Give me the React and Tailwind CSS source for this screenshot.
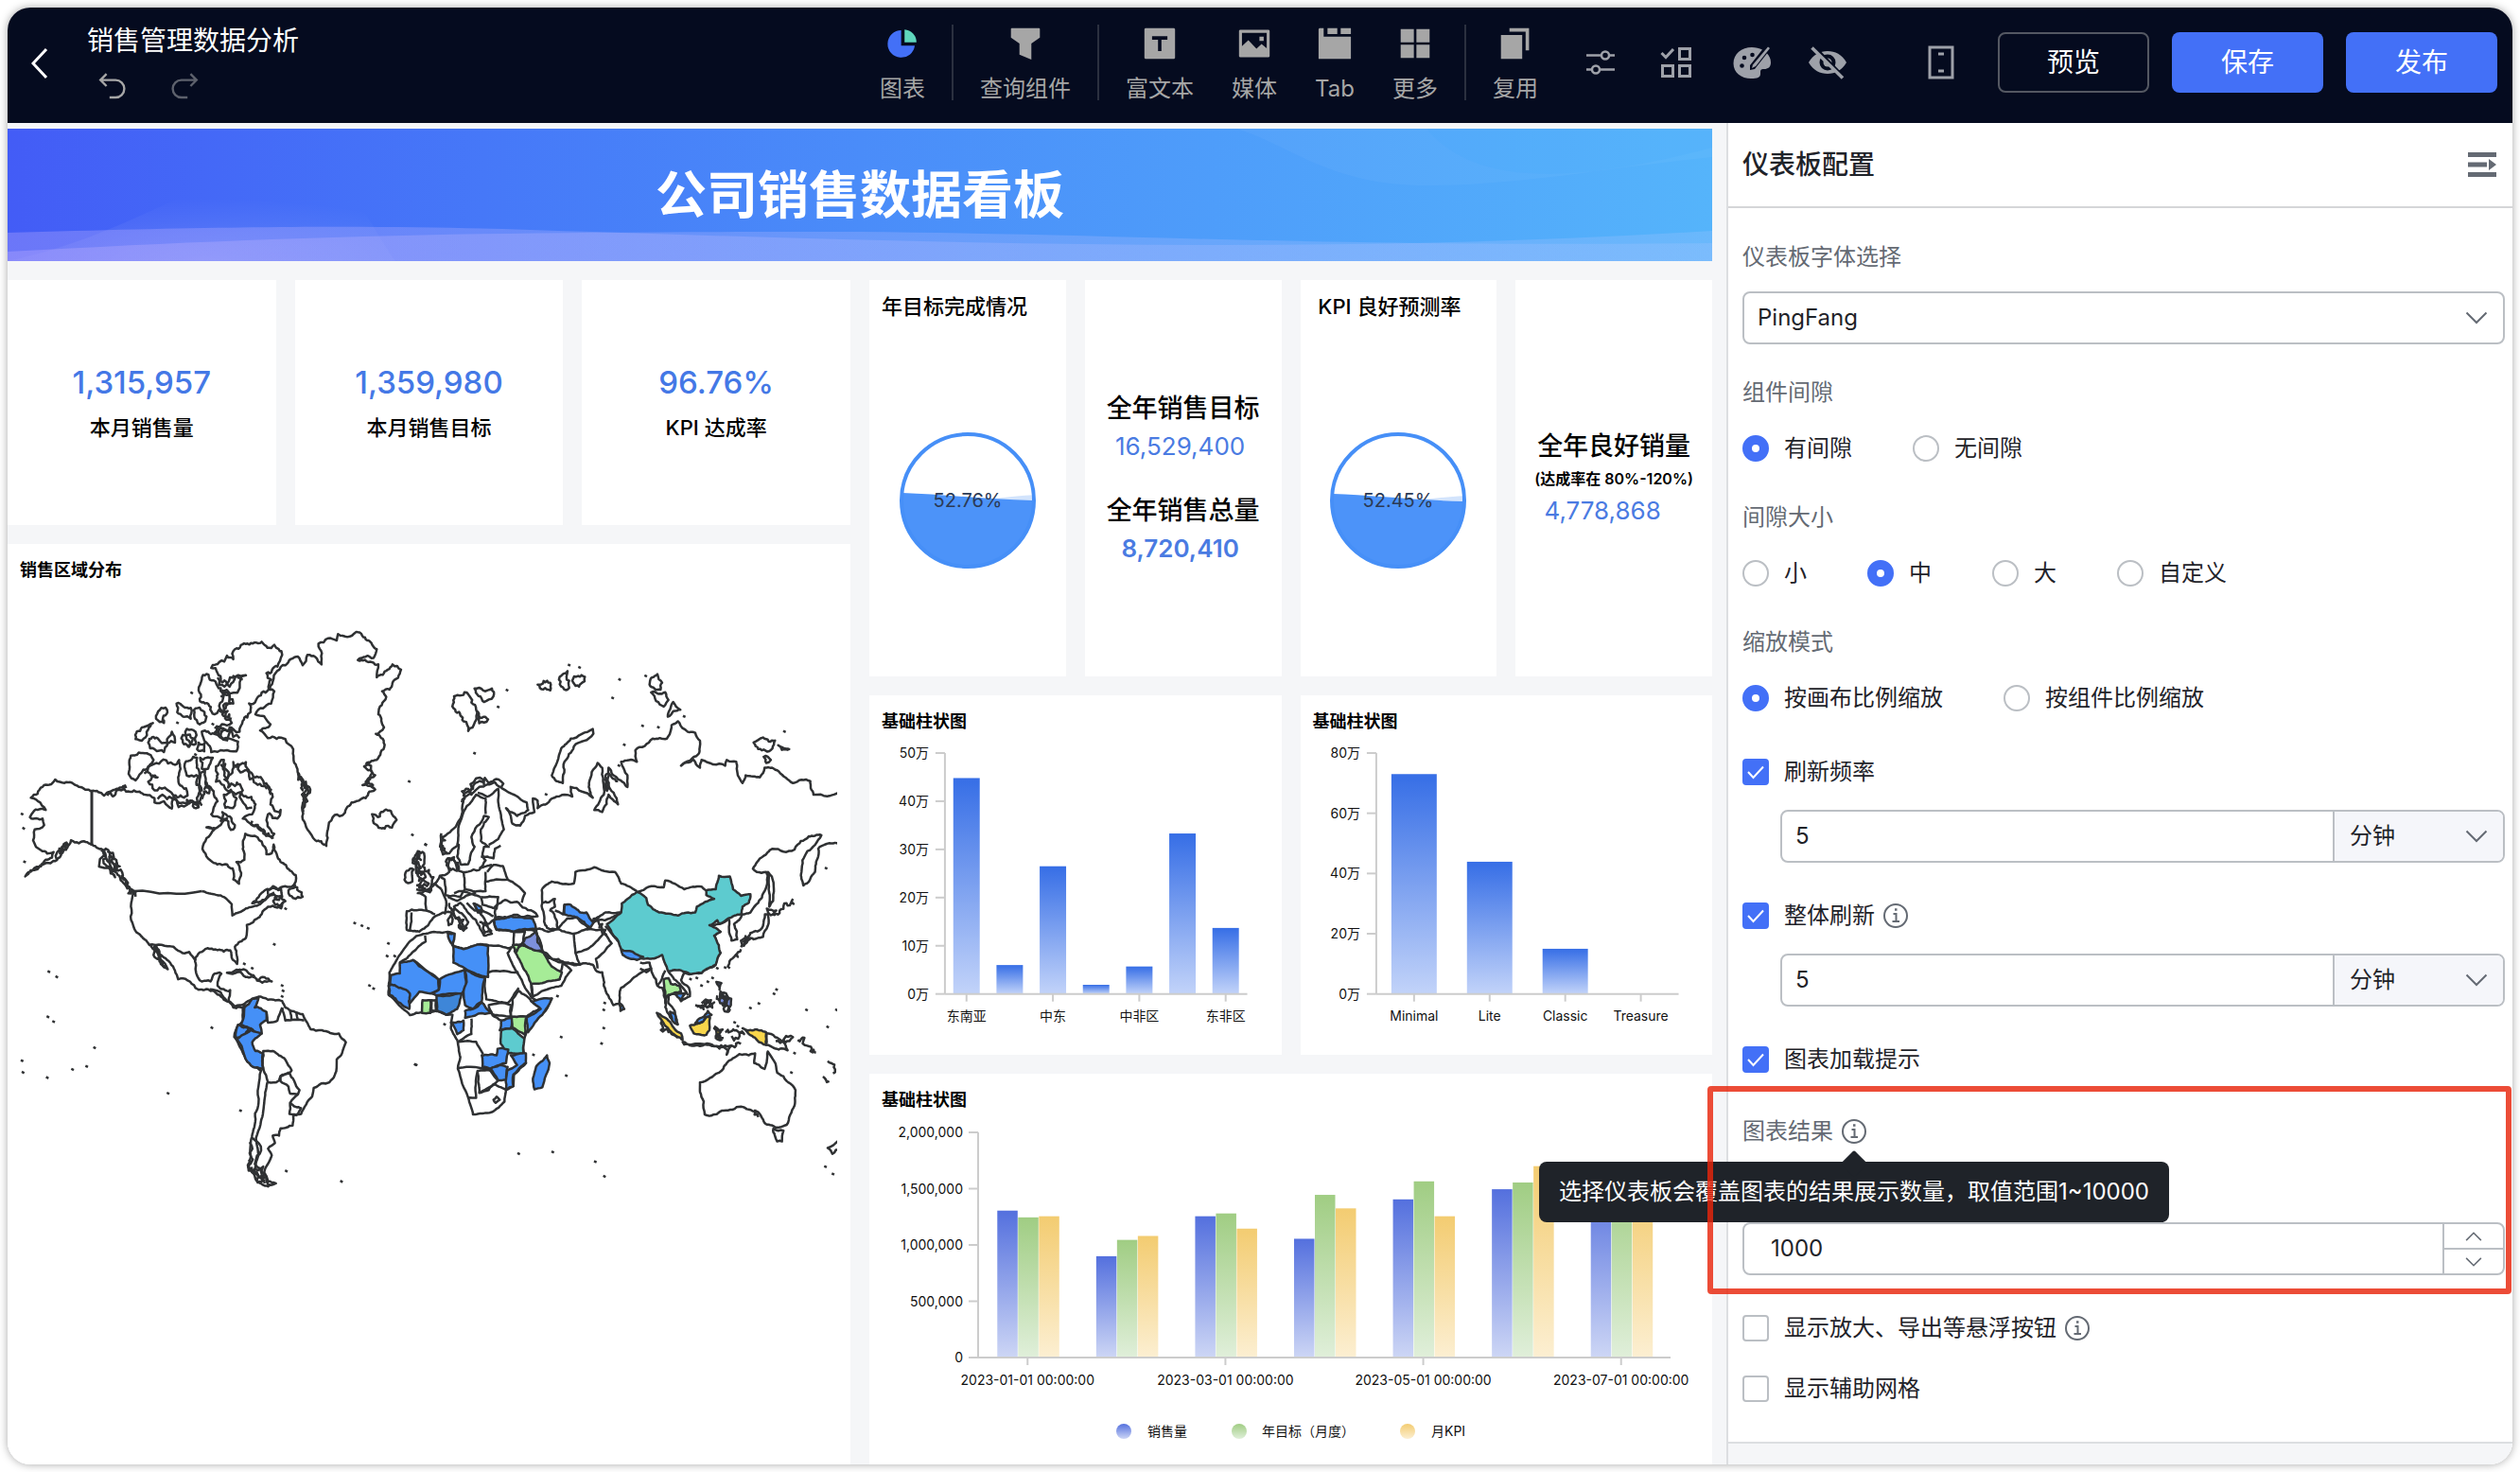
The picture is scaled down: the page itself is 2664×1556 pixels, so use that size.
import React, { useState } from 'react'

const KPIS = [
  { value: '1,315,957', label: '本月销售量' },
  { value: '1,359,980', label: '本月销售目标' },
  { value: '96.76%', label: 'KPI 达成率' },
]

const REGION_BARS = [
  { label: '东南亚', value: 448 },
  { label: '', value: 60 },
  { label: '中东', value: 265 },
  { label: '', value: 19 },
  { label: '中非区', value: 57 },
  { label: '', value: 333 },
  { label: '东非区', value: 137 },
]

const PLAN_BARS = [
  { label: 'Minimal', value: 730 },
  { label: 'Lite', value: 439 },
  { label: 'Classic', value: 150 },
  { label: 'Treasure', value: 0 },
]

const MONTHS = [
  { label: '2023-01-01 00:00:00', values: [1305, 1245, 1255] },
  { label: '', values: [900, 1045, 1080] },
  { label: '2023-03-01 00:00:00', values: [1255, 1280, 1145] },
  { label: '', values: [1055, 1445, 1325] },
  { label: '2023-05-01 00:00:00', values: [1405, 1565, 1255] },
  { label: '', values: [1495, 1555, 1700] },
  { label: '2023-07-01 00:00:00', values: [1580, 1600, 1500] },
]

const SERIES = [
  { id: 'sales', name: '销售量', from: '#5470de', to: '#cdd6f5', dot: 269, text: 294 },
  { id: 'target', name: '年目标（月度）', from: '#a0cd83', to: '#e0efda', dot: 391, text: 415 },
  { id: 'kpi', name: '月KPI', from: '#f3cc71', to: '#fcefd2', dot: 569, text: 594 },
]

/* ---------- icons ---------- */

function Svg({ size = 40, children, ...rest }) {
  return (
    <svg width={size} height={size} viewBox="0 0 40 40" fill="none" aria-hidden="true" {...rest}>
      {children}
    </svg>
  )
}

const PieIcon = () => (
  <Svg>
    <path d="M18.500 4.500A16 16 0 1 0 34.500 22.500H18.500z" fill="#4370f7" />
    <path d="M22.500 3.500a15 15 0 0 1 14 15H22.500z" fill="#5fd6bd" />
  </Svg>
)

const FunnelIcon = () => (
  <Svg>
    <path d="M4 2h32q1 0 1 1v10l-10 7v19l-14-6V20L3 13V3q0-1 1-1z" fill="currentColor" />
  </Svg>
)

const TextIcon = () => (
  <Svg>
    <path
      fillRule="evenodd"
      d="M3 2h34l1 1v34l-1 1H3l-1-1V3zM11 11.500v4h7V29h4V15.500h7v-4z"
      fill="currentColor"
    />
  </Svg>
)

const MediaIcon = () => (
  <Svg>
    <path fillRule="evenodd" d="M3 4h34l1 1v30l-1 1H3l-1-1V5zM5.500 7.500V23L13 16l9.500 10 6-5.500 6 5V7.500z" fill="currentColor" />
    <path d="M26 12h5v5h-5z" fill="currentColor" />
  </Svg>
)

const TabIcon = () => (
  <Svg>
    <path d="M2 2h5v10h32v26H1V3zM11.500 2h11.500v7H11.500zM27 2h12v7H27z" fill="currentColor" />
  </Svg>
)

const MoreIcon = () => (
  <Svg>
    <path d="M3 3h15.500v15.500H3zM21.500 3H37v15.500H21.500zM3 21.500h15.500V37H3zM21.500 21.500H37V37H21.500z" fill="currentColor" />
  </Svg>
)

const ReuseIcon = () => (
  <Svg>
    <path d="M3 10h25v28H3zM13 2h23v26h-4V6H13z" fill="currentColor" />
  </Svg>
)

const SlidersIcon = () => (
  <Svg stroke="currentColor" strokeWidth="2.500">
    <path d="M5 12.500h15.500M29 12.500h6M5 27.500h6M20 27.500h15" />
    <circle cx="25" cy="12.500" r="4" />
    <circle cx="15" cy="27.500" r="4" />
  </Svg>
)

const ChecklistIcon = () => (
  <Svg stroke="currentColor" strokeWidth="3">
    <path d="M4.500 10l4.500 4.500 8-8.500M23.500 5.500h11v11h-11zM5.500 23.500h11v11h-11zM23.500 23.500h11v11h-11z" />
  </Svg>
)

const PaletteIcon = () => (
  <Svg>
    <path
      d="M20 4C9 4 .500 11 .500 21S9 37 19 37c7 0 10-1 10-5s0-5 4-5 7-2 7-7c0-4-2-7.500-4-9.500L23 27l-5 1 0-5L31 6.500C28 5 24 4 20 4z"
      fill="currentColor"
    />
    <path d="M21 22.500 37 3.500l2 1.500-15 19-4 2z" fill="currentColor" />
    <circle cx="20.500" cy="12" r="2.300" fill="#050b1f" />
    <circle cx="12" cy="15" r="2.300" fill="#050b1f" />
    <circle cx="9.500" cy="23.500" r="2.300" fill="#050b1f" />
  </Svg>
)

const EyeOffIcon = () => (
  <Svg>
    <path d="M0 20C5 11.500 12 8 20 8s15 3.500 20 12c-5 8.500-12 12-20 12S5 28.500 0 20z" fill="currentColor" />
    <circle cx="20" cy="20" r="8.500" fill="#050b1f" />
    <circle cx="20" cy="20" r="4.500" fill="currentColor" />
    <path d="M1 5 33 38" stroke="#050b1f" strokeWidth="4" transform="translate(3 -3)" />
    <path d="M3.500 4.500 36 36.500" stroke="currentColor" strokeWidth="3.500" />
  </Svg>
)

const PhoneIcon = () => (
  <Svg stroke="currentColor" strokeWidth="3">
    <path d="M8 4h24v32H8z" />
    <path d="M17 11h6M17 29h6" />
  </Svg>
)

const UndoIcon = () => (
  <Svg size={32} stroke="currentColor" strokeWidth="3">
    <path d="M12 4 4 12l8 8M4 12h20a11 11 0 0 1 0 23h-8" />
  </Svg>
)

const RedoIcon = () => (
  <Svg size={32} stroke="currentColor" strokeWidth="3">
    <path d="m28 4 8 8-8 8M36 12H16a11 11 0 0 0 0 23h8" />
  </Svg>
)

function Chevron({ className = '' }) {
  return (
    <svg width="24" height="24" viewBox="0 0 24 24" fill="none" aria-hidden="true" className={className}>
      <path d="M1.500 6.500 12 17 22.500 6.500" stroke="#646a73" strokeWidth="2" />
    </svg>
  )
}

function InfoIcon() {
  return (
    <svg width="28" height="28" viewBox="0 0 28 28" fill="none" stroke="#646a73" strokeWidth="2" aria-hidden="true">
      <circle cx="14" cy="14" r="12" />
      <path d="M11.500 12h3v8M10.500 20h7.500" />
      <path d="M13 7.500h2.500" strokeWidth="2.500" />
    </svg>
  )
}

/* ---------- top bar ---------- */

const TOOLS = [
  { label: '图表', Icon: PieIcon, divider: true },
  { label: '查询组件', Icon: FunnelIcon, divider: true },
  { label: '富文本', Icon: TextIcon },
  { label: '媒体', Icon: MediaIcon },
  { label: 'Tab', Icon: TabIcon },
  { label: '更多', Icon: MoreIcon, divider: true },
  { label: '复用', Icon: ReuseIcon },
]

const QUICK = [
  { label: '外部参数设置', Icon: SlidersIcon },
  { label: '批量操作', Icon: ChecklistIcon },
  { label: '仪表板样式', Icon: PaletteIcon },
  { label: '隐藏组件', Icon: EyeOffIcon },
]

function TopBar() {
  return (
    <header className="flex h-[122px] shrink-0 bg-[#050b1f] pr-4 text-[#a6a6a6]">
      <div className="flex min-w-0 flex-1">
        <button aria-label="返回" className="flex w-[68px] items-center justify-center pb-1 text-white">
          <svg width="18" height="36" viewBox="0 0 18 36" fill="none" stroke="currentColor" strokeWidth="3" aria-hidden="true">
            <path d="M16 3 2 18l14 15" />
          </svg>
        </button>
        <div className="pt-[15px] pl-4">
          <h1 className="text-[28px] leading-10 whitespace-nowrap text-white">销售管理数据分析</h1>
          <div className="mt-3 flex gap-11 pl-[11px]">
            <button aria-label="撤销"><UndoIcon /></button>
            <button aria-label="重做" className="text-[#5d616c]"><RedoIcon /></button>
          </div>
        </div>
      </div>

      <nav className="flex">
        {TOOLS.map(({ label, Icon, divider }) => (
          <React.Fragment key={label}>
            <button className="flex flex-col items-center gap-3 px-5 pt-[18px]">
              <span className="flex h-10 items-center justify-center [&>svg]:size-9"><Icon /></span>
              <span className="text-2xl leading-8 whitespace-nowrap">{label}</span>
            </button>
            {divider && <span className="mx-2 mt-[18px] h-20 w-0.5 bg-[#2b303f]" />}
          </React.Fragment>
        ))}
      </nav>

      <div className="ml-[26px] flex items-center gap-10 pb-1.5 text-[#9ea1a9]">
        {QUICK.map(({ label, Icon }) => (
          <button key={label} aria-label={label}><Icon /></button>
        ))}
        <button aria-label="移动端布局" className="ml-10"><PhoneIcon /></button>
      </div>

      <div className="ml-10 flex items-center gap-6 pb-1.5 text-[28px] text-white">
        <button className="h-16 w-40 rounded-lg border-2 border-[#545862]">预览</button>
        <button className="h-16 w-40 rounded-lg bg-[#4370f7]">保存</button>
        <button className="h-16 w-40 rounded-lg bg-[#4370f7]">发布</button>
      </div>
    </header>
  )
}

/* ---------- charts ---------- */

function Banner() {
  return (
    <div className="relative flex h-[140px] items-center justify-center overflow-hidden bg-linear-to-r from-[#435cf6] via-[#4a8cf9] to-[#55b4fb]">
      <svg className="absolute inset-0 h-full w-full" viewBox="0 0 1802 140" preserveAspectRatio="none" aria-hidden="true">
        <defs>
          <radialGradient id="hill" cx="0.5" cy="1" r="0.7">
            <stop offset="0" stopColor="#fff" stopOpacity="0.14" />
            <stop offset="1" stopColor="#fff" stopOpacity="0" />
          </radialGradient>
          <linearGradient id="wave" x1="0" y1="0" x2="1" y2="0">
            <stop offset="0" stopColor="#c9b4ff" stopOpacity="0.3" />
            <stop offset="1" stopColor="#b5c8ff" stopOpacity="0.22" />
          </linearGradient>
        </defs>
        <path d="M0 140C140 110 200 45 290 45c80 0 90 55 120 95z" fill="url(#hill)" />
        <path d="M1300 0c60 20 100 60 200 60s200-20 302-30V0z" fill="#fff" fillOpacity="0.04" />
        <path d="M1500 0c50 60 150 60 302 20V0z" fill="#3fa6ff" fillOpacity="0.15" />
        <path d="M0 110C400 98 500 106 680 111c400 13 760 20 1122-3v32H0z" fill="url(#wave)" />
        <path d="M0 130c360-20 560-21 900-21 300 3 480 16 902 12v19H0z" fill="url(#wave)" />
      </svg>
      <h2 className="relative pt-0.5 text-[54px] leading-none font-bold text-white">公司销售数据看板</h2>
    </div>
  )
}

function Gauge({ title, value, label, level }) {
  return (
    <section className="flex flex-col bg-white">
      <h3 className="px-[13px] pt-[10px] text-[22px] leading-9 font-medium whitespace-pre text-black">{title}</h3>
      <div className="flex flex-1 items-center justify-center">
        <svg width="144" height="144" viewBox="0 0 144 144" role="img" aria-label={label}>
          <defs>
            <clipPath id={`clip-${level}`}><circle cx="72" cy="72" r="69" /></clipPath>
          </defs>
          <g clipPath={`url(#clip-${level})`}>
            <path d={`M60 ${level + 7}C90 ${level + 6} 120 ${level + 1} 144 ${level}v80H60z`} fill="#d3e4fc" />
            <path d={`M0 ${level - 2}C40 ${level - 1} 90 ${level + 5} 144 ${level + 6}V144H0z`} fill="#4c93f9" />
          </g>
          <circle cx="72" cy="72" r="70" fill="none" stroke="#468ff7" strokeWidth="4" />
          <text x="72" y="79" textAnchor="middle" fontSize="20" fill="#2b3a55">{value}</text>
        </svg>
      </div>
    </section>
  )
}

function CardTitle({ children }) {
  return <h3 className="px-[13px] pt-[14px] text-lg leading-7 font-bold text-black">{children}</h3>
}

function BarChart({ id, bars, max, step, barWidth }) {
  const left = 80
  const right = 400
  const base = 274
  const top = 19
  const pitch = (right - left) / bars.length
  const every = bars.length > 4 ? 2 : 1
  const ticks = []
  for (let v = 0; v <= max; v += step) ticks.push(v)
  const y = v => base - ((base - top) * v) / max

  return (
    <section className="bg-white">
      <CardTitle>基础柱状图</CardTitle>
      <svg viewBox="0 0 436 338" className="block w-full" fontSize="14" fill="#111">
        <defs>
          <linearGradient id={id} x1="0" y1="0" x2="0" y2="1">
            <stop offset="0" stopColor="#366ee6" />
            <stop offset="1" stopColor="#c2d3f9" />
          </linearGradient>
        </defs>
        <path d={`M${left} ${top}V${base}`} stroke="#ccc" strokeWidth="2" />
        {ticks.map(v => (
          <g key={v}>
            <path d={`M${left - 10} ${y(v)}h10`} stroke="#ccc" strokeWidth="2" />
            <text x={left - 17} y={y(v) + 5} textAnchor="end">{v / 10}万</text>
          </g>
        ))}
        {bars.map((bar, i) => {
          const cx = left + pitch * (i + 0.5)
          return (
            <g key={i}>
              <rect x={cx - barWidth / 2} y={y(bar.value)} width={barWidth} height={base - y(bar.value)} fill={`url(#${id})`} />
              {i % every === 0 && <path d={`M${cx} ${base}v8`} stroke="#ccc" strokeWidth="2" />}
              {bar.label && <text x={cx} y="302" textAnchor="middle">{bar.label}</text>}
            </g>
          )
        })}
        <path d={`M${left} ${base}H${right}`} stroke="#ccc" strokeWidth="2" />
      </svg>
    </section>
  )
}

function MonthlyChart() {
  const left = 115
  const right = 847
  const base = 258
  const top = 20
  const pitch = (right - left) / MONTHS.length
  const y = v => base - ((base - top) * v) / 2000

  return (
    <section className="flex-1 bg-white">
      <CardTitle>基础柱状图</CardTitle>
      <svg viewBox="0 0 891 360" className="block w-full" fontSize="14" fill="#111">
        <defs>
          {SERIES.map(s => (
            <linearGradient key={s.id} id={s.id} x1="0" y1="0" x2="0" y2="1">
              <stop offset="0" stopColor={s.from} />
              <stop offset="1" stopColor={s.to} />
            </linearGradient>
          ))}
        </defs>
        <path d={`M${left} ${top}V${base}`} stroke="#ccc" strokeWidth="2" />
        {[0, 500, 1000, 1500, 2000].map(v => (
          <g key={v}>
            <path d={`M${left - 10} ${y(v)}h10`} stroke="#ccc" strokeWidth="2" />
            <text x={left - 16} y={y(v) + 5} textAnchor="end">{(v * 1000).toLocaleString('en-US')}</text>
          </g>
        ))}
        {MONTHS.map((month, i) => {
          const cx = left + pitch * (i + 0.5)
          return (
            <g key={i}>
              {month.values.map((v, j) => (
                <rect key={j} x={cx - 32 + j * 22} y={y(v)} width="21.500" height={base - y(v)} fill={`url(#${SERIES[j].id})`} />
              ))}
              {month.label && <path d={`M${cx} ${base}v8`} stroke="#ccc" strokeWidth="2" />}
              {month.label && <text x={cx} y="287" textAnchor="middle">{month.label}</text>}
            </g>
          )
        })}
        <path d={`M${left} ${base}H${right}`} stroke="#ccc" strokeWidth="2" />
        {SERIES.map(s => (
          <g key={s.id}>
            <circle cx={s.dot} cy="336" r="8" fill={`url(#${s.id})`} />
            <text x={s.text} y="341">{s.name}</text>
          </g>
        ))}
      </svg>
    </section>
  )
}

/* ---------- world map ---------- */

// Splits every edge and nudges the new points, so a coarse outline gets a
// ragged coast. The nudge depends on the midpoint only: shared borders agree.
function coast(points, amp, close) {
  let pts = points.trim().split(' ').map(p => p.split(',').map(Number))
  if (close) pts.push(pts[0])
  for (let round = 0; round < 3; round++) {
    const next = [pts[0]]
    for (let i = 1; i < pts.length; i++) {
      const [x0, y0] = pts[i - 1]
      const [x1, y1] = pts[i]
      const len = Math.hypot(x1 - x0, y1 - y0)
      if (len > 9) {
        const mx = (x0 + x1) / 2
        const my = (y0 + y1) / 2
        const h = Math.sin(mx * 12.9898 + my * 78.233) * 43758.5453
        const off = (h - Math.floor(h) - 0.5) * len * amp
        next.push([mx - ((y1 - y0) / len) * off, my + ((x1 - x0) / len) * off])
      }
      next.push(pts[i])
    }
    pts = next
  }
  return 'M' + pts.map(p => p[0].toFixed(1) + ' ' + p[1].toFixed(1)).join('L') + (close ? 'z' : '')
}

const BLUE = '#4590f7'
const TEAL = '#5dcbcf'
const GREEN = '#a6ec97'
const YELLOW = '#f8d64b'
const PURPLE = '#7d90dc'

const WEST_LAND = [
  // North and Central America
  ['175,575 205,583 250,592 292,601 330,612 350,603 390,592 400,603 425,600 460,610 490,618 490,628 520,625 545,642 550,620 590,630 630,630 640,612 636,560 650,555 655,590 690,625 670,655 720,665 700,680 655,685 680,690 655,710 642,735 660,757 700,770 738,780 740,805 758,815 765,790 750,765 775,760 770,735 778,700 800,705 830,718 845,747 862,745 868,725 890,765 920,785 938,795 938,810 925,822 870,825 840,830 800,860 850,842 870,840 905,855 880,870 850,868 830,885 800,905 783,910 780,940 745,960 752,1000 738,990 730,968 690,968 640,972 620,985 622,1020 640,1040 668,1040 680,1022 702,1022 690,1050 730,1060 725,1085 745,1098 775,1092 775,1102 740,1100 710,1082 690,1070 660,1058 620,1055 565,1035 555,1015 520,985 492,958 510,990 532,1012 510,1000 485,965 470,952 440,930 420,905 420,845 425,832 400,820 370,790 330,740 292,725 250,722 225,715 195,745 160,768 80,798 130,775 165,755 170,742 130,738 105,715 110,690 140,680 135,665 95,662 105,650 145,645 120,625 98,617 135,592', 0.3],
  // Greenland
  ['810,425 860,400 870,372 855,368 865,350 905,312 945,292 960,312 975,288 1020,310 1010,262 1040,250 1068,255 1072,240 1130,235 1165,255 1195,275 1185,295 1135,300 1180,305 1200,310 1195,340 1230,322 1245,310 1272,322 1245,352 1235,368 1212,372 1225,385 1200,425 1218,455 1192,470 1220,495 1195,530 1155,545 1190,565 1150,588 1190,598 1160,618 1115,628 1085,658 1055,662 1040,690 1035,728 1000,715 975,690 958,640 978,600 950,570 940,545 930,505 905,482 850,480 825,462 858,448', 0.35],
  // Canadian archipelago
  ['740,298 745,275 785,262 830,258 870,265 895,288 880,315 845,330 860,345 830,375 790,400 795,420 770,440 760,465 680,468 735,445 705,425 730,400 705,370 780,335 720,355 690,330 670,318 720,290', 0.6],
  ['655,332 690,360 705,375 710,420 680,425 650,400 630,370 640,345', 0.6],
  ['640,465 680,470 755,488 750,510 670,512 655,490', 0.4],
  ['485,445 470,460 430,482 450,455 475,448', 0.5],
  ['470,490 500,480 530,490 545,465 555,490 520,512 490,505', 0.6],
  ['560,400 605,410 605,435 580,430', 0.6],
  ['495,435 530,415 520,445', 0.6],
  ['615,415 655,430 640,445 618,435', 0.6],
  ['575,480 620,465 615,495 580,490', 0.7],
  ['590,475 612,480 600,500', 0.7],
  ['630,490 650,490 648,510 625,505', 0.5],
  ['415,520 440,513 487,530 455,552 430,577 408,562', 0.3],
  ['487,540 550,540 568,530 565,570 590,595 595,612 550,612 490,600 470,580 500,570 460,560', 0.5],
  ['585,545 625,525 630,570 600,568', 0.6],
  ['635,525 675,525 660,550 640,550', 0.4],
  ['685,545 710,530 715,570 740,535 780,535 785,550 820,570 855,600 860,620 890,645 880,665 850,655 870,700 865,705 830,690 800,680 770,665 800,655 805,625 765,605 720,600 685,580', 0.6],
  ['705,650 745,680 740,690 700,670', 0.6],
  ['710,610 740,605 745,635 715,640', 0.6],
  ['915,830 935,818 960,845 930,848', 0.6],
  ['1180,655 1205,660 1240,648 1258,668 1220,688 1185,675', 0.5],
  ['720,1020 750,1013 790,1022 815,1035 780,1030 755,1018', 0.3],
  ['815,1038 862,1040 832,1043', 0.5],
  ['1325,740 1345,745 1340,775 1375,800 1368,830 1328,820 1350,800 1320,790 1310,760', 0.6],
  ['1290,785 1312,782 1308,810 1283,806', 0.5],
  // South America
  ['775,1092 800,1080 820,1075 850,1082 895,1085 905,1100 960,1115 985,1150 1020,1152 1075,1160 1097,1180 1085,1205 1068,1220 1062,1255 1045,1272 995,1285 990,1305 955,1345 930,1350 928,1372 890,1378 885,1395 865,1395 872,1412 850,1425 862,1440 850,1460 838,1480 850,1500 875,1505 850,1512 815,1500 790,1470 795,1415 808,1370 820,1320 828,1245 785,1225 760,1190 743,1168 755,1140 772,1130 770,1105', 0.2],
  ['775,1100 800,1080 820,1078 808,1100 845,1110 845,1130 825,1140 830,1160 800,1150 765,1138 772,1125', 0.2, BLUE],
  ['755,1140 790,1148 775,1165 748,1170', 0.2, BLUE],
  ['748,1172 795,1152 830,1160 800,1180 810,1200 832,1205 835,1242 785,1225', 0.2, BLUE],
  ['835,1200 865,1200 905,1220 925,1245 915,1252 890,1258 885,1268 850,1272 835,1242', 0.2],
  ['890,1258 915,1250 950,1290 945,1300 920,1298 915,1282 890,1270', 0.2],
  ['920,1320 955,1332 940,1348 918,1345', 0.2],
]

const WEST_LINES = [
  '425,832 640,832',
  '475,955 550,960 580,975 600,972 620,992',
  '640,832 700,842 735,862 737,888 780,872 825,862 870,835',
  '845,1110 850,1135 880,1130 895,1100',
  '895,1100 905,1130 935,1128 965,1130',
  '920,1108 925,1130',
  '940,1110 945,1130',
  '848,1272 838,1320 826,1370 812,1400 820,1440 805,1480 840,1500',
  '945,1300 920,1320',
  '665,1058 700,1065 720,1085',
]

// Inlets and skerries too dense to outline one by one
const WEST_ROUGH = [
  '325,735 375,775 350,775 330,745',
  '345,755 375,785 400,820 430,845',
  '320,738 360,770 380,775 340,740',
  '350,785 365,800 358,792',
  '385,795 400,815 430,835 410,830',
  '340,612 370,600 385,600 400,595',
  '500,620 560,622 610,625 640,635',
  '700,540 712,575 745,590 770,600 800,640',
  '740,545 790,560 830,590 860,610',
  '800,670 835,690 868,708',
  '955,575 975,590 958,610 975,625 962,650',
  '945,560 960,600 970,580 965,640',
  '1160,540 1180,560 1160,580 1185,590',
  '850,840 895,845 870,860 900,858',
  '485,960 505,985 525,1005',
  '792,1410 802,1450 795,1475 830,1500',
  '800,1400 812,1450 820,1490 860,1508',
  '790,1450 800,1480 815,1480 840,1505',
  '210,720 190,745 215,725 180,760',
  '690,340 740,350 770,345',
  '700,385 740,400 710,410 735,435',
  '680,455 740,460 700,475 760,480',
  '635,570 640,600 630,640',
  '650,580 665,600 640,620',
  '1320,745 1335,760 1320,775 1345,790',
]

const EAST_LAND = [
  // Africa
  ['0,856 30,850 100,845 120,850 115,880 150,890 195,878 230,880 290,888 303,885 290,900 320,950 345,990 365,1015 390,1030 430,1018 410,1050 350,1105 340,1130 348,1185 310,1215 308,1245 285,1255 280,1285 240,1312 180,1318 165,1275 132,1200 140,1170 130,1125 110,1095 115,1060 95,1060 60,1050 20,1052 -20,1061 -60,1030 -88,1008 -85,951 -60,915 -30,880', 0.12],
  ['-80,957 -52,953 -52,925 -10,918 70,968 72,995 45,1005 10,1000 -10,1020 -20,1030 -40,1010 -84,990', 0.08, BLUE],
  ['-88,985 -50,990 -20,1005 -22,1045 -50,1030 -85,1010', 0.3, BLUE],
  ['75,968 155,942 160,985 145,1005 65,1010 50,1005 72,995', 0.1, BLUE],
  ['155,942 218,965 208,1025 180,1045 155,1035 150,1000 160,975', 0.12, BLUE],
  ['155,1050 180,1045 208,1028 240,1055 155,1068', 0.15, BLUE],
  ['117,880 150,890 195,878 228,882 228,962 155,940 118,925', 0.1, BLUE],
  ['100,848 122,850 115,880', 0.2, BLUE],
  ['65,1010 145,1005 130,1045 95,1060 65,1048', 0.15, '#3e86d8'],
  ['20,1022 45,1022 45,1055 18,1055', 0.1, GREEN],
  ['48,1022 62,1022 62,1050 48,1053', 0.1],
  ['110,1080 150,1075 150,1100 130,1110', 0.2, BLUE],
  ['230,1035 300,1035 300,1065 240,1058', 0.2],
  ['300,1055 305,1020 325,998 365,1025 395,1042 350,1065 300,1065', 0.15],
  ['300,1065 350,1065 345,1112 305,1092', 0.12, GREEN],
  ['270,1075 303,1068 300,1095 265,1100', 0.15, BLUE],
  ['365,1025 430,1018 400,1060 355,1105 350,1068 395,1045', 0.1, BLUE],
  ['270,1100 305,1095 342,1120 340,1160 290,1160 268,1135', 0.12, TEAL],
  ['208,1165 255,1165 258,1148 292,1150 285,1185 235,1200 210,1195', 0.15, BLUE],
  ['300,1165 348,1160 348,1185 308,1215 308,1245 285,1253 288,1205 320,1190', 0.15, BLUE],
  ['235,1200 265,1190 290,1195 285,1228 260,1230', 0.15, BLUE],
  ['400,1180 415,1165 423,1185 400,1248 375,1253 370,1225 380,1195', 0.15, BLUE],
  ['195,1205 235,1205 260,1230 230,1255 200,1262', 0.15],
  ['245,1280 255,1272 265,1280 252,1288', 0.2],
  // Middle East
  ['310,845 345,845 340,870 330,880 315,895 308,880', 0.15],
  ['400,895 430,915 470,925 520,930 505,900 500,850 450,838 420,845 380,838 385,860', 0.15],
  ['365,980 455,968 465,925 492,945 460,985 430,990 370,1013', 0.12],
  ['312,895 335,880 372,892 405,900 430,935 462,950 455,968 400,978 365,980 340,940', 0.12, GREEN],
  ['306,880 330,878 318,897', 0.1, GREEN],
  ['345,862 380,845 400,895 372,892 338,875', 0.12, PURPLE],
  ['245,815 300,805 370,812 380,838 310,845 255,840', 0.15, BLUE],
  ['185,772 205,780 208,795 195,795', 0.2, BLUE],
  // Europe
  ['85,645 78,600 130,565 150,500 200,470 250,458 275,475 350,510 355,530 320,545 285,525 300,545 305,565 330,570 345,545 375,535 370,500 385,505 385,525 430,500 495,495 490,470 560,498 548,460 575,408 590,420 595,490 565,530 590,535 610,490 640,515 605,460 610,420 640,450 670,470 670,440 650,405 700,405 695,375 750,345 795,345 810,310 830,300 850,320 885,330 900,350 895,385 840,415 880,400 900,420 905,400 980,415 985,400 1015,405 1020,440 1035,460 1045,440 1090,445 1105,420 1150,430 1195,460 1250,455 1260,490 1345,480 1345,618 1300,618 1275,630 1275,650 1265,690 1228,725 1222,690 1225,660 1265,620 1285,595 1245,598 1220,610 1200,632 1130,630 1100,650 1068,682 1080,690 1110,690 1115,700 1105,740 1085,770 1060,795 1035,800 1008,825 1018,865 1000,868 990,810 960,825 930,828 965,845 945,855 965,900 950,930 905,952 870,955 850,950 840,970 865,990 868,1012 840,1025 820,1005 800,1010 800,1030 820,1050 830,1085 812,1072 790,1040 785,1000 780,990 765,985 750,955 745,940 705,955 650,990 645,1030 625,1035 595,985 590,950 570,945 560,930 520,930 470,925 430,915 400,895 380,845 310,845 255,840 245,815 225,825 240,850 215,855 200,830 175,805 140,770 120,780 165,820 150,840 110,795 60,805 40,825 10,845 -30,840 -30,792 32,790 30,755 5,745 60,720 75,700 105,690 105,655 120,660 130,685 200,685 220,660 210,645 215,625 230,625 205,610 205,580 230,548 215,545 175,600 185,625 165,670 140,670 130,650 135,620 105,642', 0.22, 'none'],
  ['100,655 120,652 135,685 110,685', 0.6],
  ['100,815 112,800 112,825 103,828', 0.3],
  ['135,828 160,835 150,842', 0.5],
  ['400,770 440,760 440,780 425,790 445,815 450,838 415,835 405,800', 0.3],
  ['250,780 275,765 325,770 385,805 300,805 250,810', 0.3],
  ['560,320 562,332 500,365 470,405 465,460 445,455 430,440 460,370 490,345', 0.25],
  ['120,235 165,230 190,270 165,325 150,300 125,275', 0.6],
  ['185,215 240,215 245,235 215,250', 0.4],
  ['195,275 228,295 200,305', 0.5],
  ['385,205 425,200 425,220', 0.7],
  ['455,185 480,170 485,195 480,218 460,210', 0.7],
  ['495,195 535,185 505,208', 0.6],
  ['740,205 765,178 780,200 775,218', 0.4],
  ['745,225 790,225 800,245 785,262', 0.3],
  ['798,288 815,250 838,270', 0.3],
  ['1070,355 1100,342 1138,350 1130,370 1085,372', 0.4],
  ['1148,362 1183,372 1160,374', 0.3],
  ['1102,392 1125,400 1110,408', 0.4],
  // Asia
  ['470,775 490,775 520,795 540,795 562,822 552,835 510,808 470,800', 0.15, BLUE],
  ['605,825 650,795 652,772 670,760 700,742 730,758 735,775 770,795 830,803 885,795 890,780 945,760 920,750 920,738 950,735 960,700 995,702 1005,735 1030,752 1060,748 1055,770 1035,780 1030,800 990,810 960,825 955,815 930,828 950,835 965,845 945,855 960,880 965,900 950,930 905,952 870,955 840,945 800,948 788,925 780,905 745,915 700,910 650,890 640,868 625,855', 0.15, TEAL],
  ['650,892 720,910 700,918 655,905', 0.15, BLUE],
  ['645,1030 660,1045 648,1050', 0.2, BLUE],
  ['785,968 800,965 808,980 835,985 840,1000 800,1008 790,1030 790,1000', 0.2, GREEN],
  ['820,1005 855,1003 840,1022', 0.2, BLUE],
  ['805,1052 822,1060 828,1085 812,1075', 0.2, BLUE],
  ['763,1055 800,1075 840,1108 845,1125 810,1110 775,1070', 0.2, YELLOW],
  ['845,1130 900,1135 960,1142 1000,1140 960,1145 900,1141 850,1137', 0.2, YELLOW],
  ['868,1088 905,1080 920,1062 932,1068 930,1100 920,1112 880,1108', 0.2, YELLOW],
  ['885,1082 925,1050 937,1060 910,1078', 0.3, BLUE],
  ['945,1095 972,1098 955,1110 968,1125 950,1120', 0.5, YELLOW],
  ['1035,1095 1070,1100 1110,1105 1110,1138 1080,1125 1050,1105', 0.25, YELLOW],
  ['1110,1108 1165,1130 1178,1152 1140,1148 1110,1138', 0.25],
  ['952,975 968,978 962,995', 0.4, PURPLE],
  ['965,1000 985,1010 998,1035 990,1052 970,1030', 0.7, PURPLE],
  ['1116,690 1128,702 1132,765 1120,780 1118,720', 0.15],
  ['1112,785 1142,790 1125,802', 0.3],
  ['1115,800 1115,830 1100,858 1060,862 1035,880 1030,868 1060,848 1100,830 1106,800', 0.3],
  // Australia
  ['900,1235 960,1210 985,1185 1025,1162 1055,1165 1075,1160 1072,1185 1105,1200 1115,1155 1135,1180 1145,1210 1180,1235 1203,1255 1200,1295 1175,1345 1140,1352 1105,1340 1080,1310 1030,1298 975,1308 930,1322 915,1318 912,1285 900,1260', 0.2],
  ['1133,1355 1165,1360 1160,1388 1145,1388', 0.3],
  ['1345,1382 1305,1405 1320,1420 1345,1405', 0.3],
]

const EAST_LINES = [
  '-30,915 0,890 30,870 28,855',
  '-10,918 70,968',
  '-52,925 -30,915',
  '230,950 325,950',
  '218,965 222,1020 240,1022 290,1030 325,990',
  '135,1130 190,1130 212,1162',
  '175,1070 175,1110 135,1130',
  '240,1060 270,1075',
  '132,1198 240,1204',
  '195,1205 190,1275 165,1275',
  '200,1262 250,1240 288,1255',
  '365,980 368,1012',
  '398,735 400,770',
  '398,735 430,715 500,720 505,690 565,678 630,690 650,720 700,740',
  '440,790 465,800 470,775',
  '650,795 600,795 560,812',
  '700,742 740,728 785,730 790,712 850,735 905,728 920,738',
  '450,838 480,810 510,808 550,838 500,850',
  '550,838 600,840 560,880 505,900',
  '590,845 620,875 570,915 575,940',
  '600,830 620,850 640,870',
  '560,812 600,815 640,800',
  '710,925 740,925 745,940 730,950 710,940',
  '790,945 765,985',
  '800,948 840,985 862,1010',
  '75,700 90,710 92,750 140,755 155,735 220,740 220,690',
  '150,690 155,735',
  '225,690 245,672 275,675 290,710 220,715',
  '290,710 345,745 335,770',
  '205,755 260,755 255,785 210,775 205,755',
  '100,755 130,765 190,745',
  '32,790 60,800',
  '0,735 40,740 60,720 80,735',
  '130,620 135,570 160,520 190,490 220,500 220,540',
  '195,485 225,495 260,475 262,520 278,580 260,605 230,620',
  '205,650 245,655 250,630 268,622',
  '200,680 240,672',
  '180,770 205,800 225,825',
  '160,770 185,790 210,790 245,805',
  '80,735 95,765 90,800',
  '120,745 135,740 185,750 205,755',
  '-15,795 -20,840',
]

const EAST_ROUGH = [
  '80,590 90,630 80,610 100,640',
  '150,495 180,475 230,460 270,470',
  '145,510 175,490 215,465',
  '200,820 225,830 215,850 240,845',
  '595,450 605,480 600,440 640,455',
  '890,1040 920,1025 945,1028 900,1042',
  '885,1035 915,1035 935,1022 905,1030',
  '965,1010 985,1030 975,1045 995,1045',
  '965,1000 990,1020 980,1040',
  '955,1010 975,1018 985,1035',
  '980,1105 1015,1100 1040,1110 1000,1115',
  '945,1090 960,1100 950,1115 975,1120',
  '960,1150 1000,1140 1030,1135',
  '1140,1128 1195,1118 1170,1130',
  '1210,1125 1240,1140 1268,1158',
  '1290,1220 1310,1232',
  '1305,1180 1322,1212',
  '1130,800 1165,778 1195,760',
  '995,940 1020,910 1030,890',
  '1035,870 1060,862 1030,885',
  '1075,1305 1085,1325',
  '0,640 15,680 5,700 40,720 0,725',
  '560,812 590,825 605,850',
  '780,1075 800,1105 830,1120',
  '105,770 120,785 150,830',
]

const WEST_DOTS = '70,655 75,688 78,765 155,1018 180,1030 152,1122 170,1133 300,1193 70,1223 73,1250 230,1243 275,1236 150,1262 533,1298 763,1338 908,1477 1083,1501 870,955 906,873 672,1147 1298,580 1308,703 1350,725 1125,906 1148,912 1168,918 1232,953 1228,982 1252,982 1172,1050 1185,1057 1317,1232 608,376 675,448 563,445 895,1050 898,1062 895,1075 620,518 800,1010 775,1000'
const EAST_DOTS = '185,383 288,220 260,263 485,155 518,161 645,192 623,240 728,183 850,288 768,316 718,312 660,361 1168,327 412,490 643,415 30,620 1300,681 598,1030 595,1048 595,1095 588,1135 460,1118 448,1012 476,1218 372,1164 0,1190 325,1420 433,1416 568,1441 597,1479 1143,995 1135,1006 1087,1031 1238,1048 1305,1092 1333,1048 1060,1043 1298,1454 1322,1473 90,1085 955,940 980,938 890,965 905,985 940,965 925,975 1010,1080 1020,1090 1200,1160 1190,1210 870,968'

function Dots({ points }) {
  return points.split(' ').map(p => {
    const [x, y] = p.split(',').map(Number)
    return <path key={p} d={`M${x - 4} ${y - 2}l8 3`} fill="none" />
  })
}

function Region({ land, lines, rough, dots, transform }) {
  return (
    <g transform={transform} className="[&_path]:[vector-effect:non-scaling-stroke]">
      {land.map(([points, amp, fill]) => (
        <path key={points} d={coast(points, amp, true)} fill={fill || 'none'} />
      ))}
      {lines.map(points => <path key={points} d={coast(points, 0.12, false)} fill="none" />)}
      {rough.map(points => <path key={points} d={coast(points, 1, false)} fill="none" />)}
      <Dots points={dots} />
    </g>
  )
}

function WorldMap() {
  return (
    <section className="flex-1 bg-white">
      <CardTitle>销售区域分布</CardTitle>
      <svg viewBox="8 617 891 700" className="block w-full" stroke="#2f3133" strokeWidth="2.500" strokeLinejoin="round" role="img" aria-label="销售区域分布">
        <defs>
          <clipPath id="frame"><path d="M20 617h865v700H20z" /></clipPath>
        </defs>
        <g clipPath="url(#frame)">
          <Region land={WEST_LAND} lines={WEST_LINES} rough={WEST_ROUGH} dots={WEST_DOTS} transform="translate(0 560) scale(0.3333 0.4591)" />
          <path d="M97 836v58" strokeWidth="3" />
          <Region land={EAST_LAND} lines={EAST_LINES} rough={EAST_ROUGH} dots={EAST_DOTS} transform="translate(440 640) scale(0.3333 0.4082)" />
        </g>
      </svg>
    </section>
  )
}

function Dashboard() {
  return (
    <main className="flex min-w-0 flex-1 flex-col gap-5 bg-[#f5f6f8] pt-[6px] pr-[15px]">
      <Banner />
      <div className="grid flex-1 grid-cols-2 gap-5">
        <div className="flex flex-col gap-5">
          <div className="grid h-[259px] grid-cols-3 gap-5">
            {KPIS.map(kpi => (
              <section key={kpi.label} className="flex flex-col items-center bg-white pt-[86px]">
                <strong className="text-[33px] leading-[44px] font-medium text-[#4478e6]">{kpi.value}</strong>
                <span className="mt-2 text-[22px] leading-9 font-medium text-black">{kpi.label}</span>
              </section>
            ))}
          </div>
          <WorldMap />
        </div>

        <div className="flex flex-col gap-5">
          <div className="grid h-[419px] grid-cols-4 gap-5">
            <Gauge title="年目标完成情况" label="年目标完成情况" value="52.76%" level={66} />
            <section className="flex flex-col items-center bg-white pt-[116px] text-[27px] leading-10 whitespace-nowrap">
              <span className="font-medium text-black">全年销售目标</span>
              <span className="pr-1.5 text-[26px] text-[#4a7be2]">16,529,400</span>
              <span className="mt-7 font-medium text-black">全年销售总量</span>
              <span className="pr-1.5 text-[26px] font-semibold text-[#4a7be2]">8,720,410</span>
            </section>
            <Gauge title={'\u00a0KPI 良好预测率'} label="KPI 良好预测率" value="52.45%" level={67} />
            <section className="flex flex-col items-center bg-white pt-[156px] text-[27px] leading-10 whitespace-nowrap">
              <span className="font-medium text-black">全年良好销量</span>
              <span className="text-base leading-7 font-semibold text-black">(达成率在 80%-120%)</span>
              <span className="pr-6 text-[26px] text-[#4a7be2]">4,778,868</span>
            </section>
          </div>
          <div className="grid grid-cols-2 gap-5">
            <BarChart id="region" bars={REGION_BARS} max={500} step={100} barWidth={28} />
            <BarChart id="plan" bars={PLAN_BARS} max={800} step={200} barWidth={48} />
          </div>
          <MonthlyChart />
        </div>
      </div>
    </main>
  )
}

/* ---------- config panel ---------- */

function Radios({ legend, name, options, value }) {
  return (
    <fieldset>
      <legend className="leading-8 text-[#646a73]">{legend}</legend>
      <div className="mt-[27px] flex gap-16">
        {options.map(option => (
          <label key={option} className="flex h-8 items-center gap-4">
            <input
              type="radio"
              name={name}
              defaultChecked={option === value}
              className="size-7 appearance-none rounded-full border-2 border-[#bbbfc4] bg-white checked:border-[10px] checked:border-[#4370f7]"
            />
            {option}
          </label>
        ))}
      </div>
    </fieldset>
  )
}

function Check({ label, checked, info }) {
  return (
    <div className="flex h-8 items-center gap-2">
      <label className="flex items-center gap-4">
        <span className="grid size-7">
          <input
            type="checkbox"
            defaultChecked={checked}
            className="peer col-start-1 row-start-1 size-7 appearance-none rounded-sm border-2 border-[#bbbfc4] bg-white checked:border-[#4370f7] checked:bg-[#4370f7]"
          />
          <svg viewBox="0 0 28 28" fill="none" stroke="#fff" strokeWidth="2" aria-hidden="true" className="pointer-events-none invisible col-start-1 row-start-1 peer-checked:visible">
            <path d="m6 14 5.500 6L22 8.500" />
          </svg>
        </span>
        {label}
      </label>
      {info && <InfoIcon />}
    </div>
  )
}

function Interval({ label }) {
  return (
    <div className="mt-6 mb-10 ml-10 flex h-14 overflow-hidden rounded-lg border-2 border-[#bbbfc4]">
      <input aria-label={label} defaultValue="5" className="min-w-0 flex-1 px-[14px] outline-none" />
      <div className="relative w-[180px] border-l-2 border-[#bbbfc4] bg-[#f5f6fa]">
        <select aria-label={`${label}单位`} className="h-full w-full appearance-none bg-transparent px-4 outline-none">
          <option>分钟</option>
        </select>
        <Chevron className="pointer-events-none absolute top-[14px] right-4" />
      </div>
    </div>
  )
}

function ResultField() {
  const [count, setCount] = useState(1000)

  return (
    <div className="relative mt-11">
      <div className="flex h-8 items-center gap-2 text-[#646a73]">
        <label htmlFor="result-count">图表结果</label>
        <span className="relative">
          <InfoIcon />
          <span role="tooltip" className="absolute top-[46px] left-1/2 z-10 -translate-x-1/2 rounded-lg bg-[#1f2329] px-[21px] leading-[64px] whitespace-nowrap text-white">
            <span className="absolute -top-2 left-1/2 size-5 -translate-x-1/2 rotate-45 rounded-xs bg-[#1f2329]" />
            <span className="relative">选择仪表板会覆盖图表的结果展示数量，取值范围1~10000</span>
          </span>
        </span>
      </div>
      <div className="mt-20 flex h-14 overflow-hidden rounded-lg border-2 border-[#bbbfc4]">
        <input
          id="result-count"
          inputMode="numeric"
          value={count}
          onChange={e => setCount(Number(e.target.value) || 0)}
          className="min-w-0 flex-1 px-7 outline-none"
        />
        <div className="flex w-16 flex-col border-l-2 border-[#bbbfc4]">
          <button type="button" aria-label="增加" onClick={() => setCount(count + 1)} className="flex flex-1 items-center justify-center border-b-2 border-[#bbbfc4]">
            <Chevron className="size-[18px] rotate-180" />
          </button>
          <button type="button" aria-label="减少" onClick={() => setCount(count - 1)} className="flex flex-1 items-center justify-center">
            <Chevron className="size-[18px]" />
          </button>
        </div>
      </div>
      <div className="pointer-events-none absolute -top-8 -right-[7px] -bottom-5 -left-[37px] z-20 rounded-sm border-[6px] border-[rgba(232,36,11,0.82)]" />
    </div>
  )
}

function ConfigPanel() {
  return (
    <aside className="flex w-[831px] shrink-0 flex-col border-l-2 border-[#dcdee1] bg-white text-2xl text-[#1f2329]">
      <div className="flex h-[90px] items-center justify-between border-b-2 border-[#d5d6d8] pr-4 pl-[15px]">
        <h2 className="pt-0.5 text-[28px] font-medium">仪表板配置</h2>
        <button aria-label="收起面板">
          <svg width="32" height="28" viewBox="0 0 32 28" fill="#646a73" aria-hidden="true">
            <path d="M1 1h30v5H1zM1 11.500h20v5H1zM1 22h30v5H1zM23 8l8 6-8 6z" />
          </svg>
        </button>
      </div>

      <form className="pt-9 pr-2 pb-10 pl-[15px]">
        <label htmlFor="font" className="block leading-8 text-[#646a73]">仪表板字体选择</label>
        <div className="relative mt-5">
          <select id="font" className="h-14 w-full appearance-none rounded-lg border-2 border-[#bbbfc4] bg-white px-[14px] outline-none">
            <option>PingFang</option>
          </select>
          <Chevron className="pointer-events-none absolute top-4 right-[18px]" />
        </div>

        <div className="mt-[35px] mb-[46px] flex flex-col gap-[41px]">
          <Radios legend="组件间隙" name="gap" options={['有间隙', '无间隙']} value="有间隙" />
          <Radios legend="间隙大小" name="gap-size" options={['小', '中', '大', '自定义']} value="中" />
          <Radios legend="缩放模式" name="scale" options={['按画布比例缩放', '按组件比例缩放']} value="按画布比例缩放" />
        </div>

        <Check label="刷新频率" checked />
        <Interval label="刷新频率" />
        <Check label="整体刷新" checked info />
        <Interval label="整体刷新" />
        <Check label="图表加载提示" checked />
        <ResultField />
        <div className="mt-10 flex flex-col gap-8">
          <Check label="显示放大、导出等悬浮按钮" info />
          <Check label="显示辅助网格" />
        </div>
      </form>
      <div className="flex-1 border-t-2 border-[#dcdee1] bg-[#f5f6f8]" />
    </aside>
  )
}

export default function App() {
  return (
    <div className="flex min-h-screen bg-white p-2 font-['Inter','Noto_Sans_CJK_SC',sans-serif]">
      <div className="flex min-w-0 flex-1 flex-col overflow-hidden rounded-3xl shadow-[0_0_10px_rgba(0,0,0,0.35)]">
        <TopBar />
        <div className="flex flex-1">
          <Dashboard />
          <ConfigPanel />
        </div>
      </div>
    </div>
  )
}
